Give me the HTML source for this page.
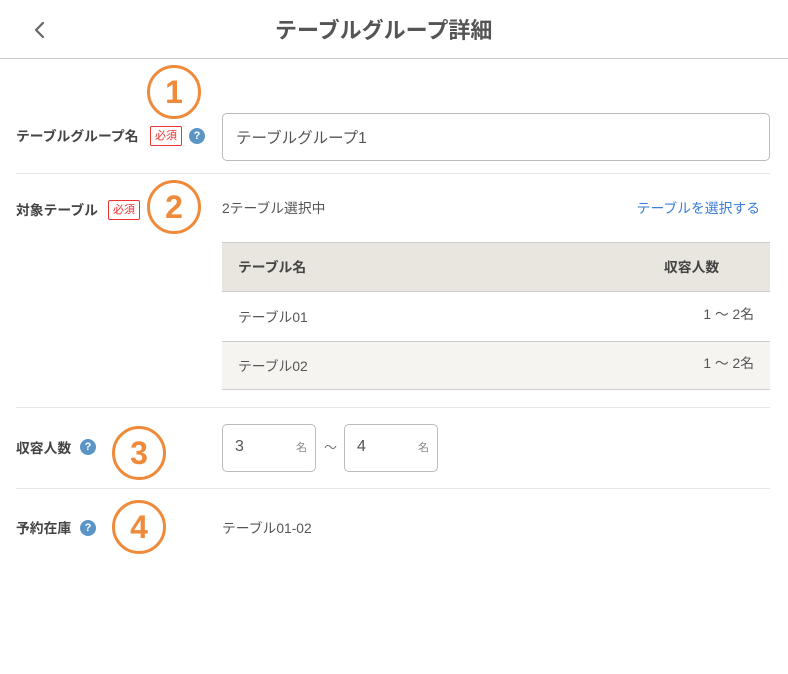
<!DOCTYPE html>
<html><head><meta charset="utf-8"><style>
*{margin:0;padding:0;box-sizing:border-box}
body{width:788px;height:674px;background:#fff;position:relative;font-family:"Liberation Sans","Noto Sans CJK JP",sans-serif;color:#555;overflow:hidden}
.a{position:absolute}
.lbl{font-size:13.8px;font-weight:bold;color:#444}
.req{border:1px solid #e33;color:#e33;font-size:11px;width:32px;height:20px;text-align:center;line-height:18px;border-radius:2px}
.q{width:16px;height:16px;border-radius:50%;background:#5b95c6;color:#fff;font-size:11px;font-weight:bold;text-align:center;line-height:16px}
.c{width:54px;height:54px;border:3px solid #ef8a3a;border-radius:50%;color:#ef8a3a;font-size:32px;font-weight:bold;text-align:center;line-height:48px}
.hr{height:1px;background:#e8e8e8;left:16px;width:754px}
.t{font-size:13.8px;color:#555}
.box{border:1px solid #bbb;border-radius:5px;background:#fff}
</style></head><body>
<svg class="a" style="left:32px;top:20px" width="14" height="20"><path d="M11 3 L4 10 L11 17" fill="none" stroke="#666" stroke-width="2.2" stroke-linecap="round" stroke-linejoin="round"/></svg>
<div class="a" style="left:275px;top:13px;font-size:22px;font-weight:bold;color:#555;white-space:nowrap">テーブルグループ詳細</div>
<div class="a" style="left:0;top:58px;width:788px;height:1px;background:#ccc"></div>

<div class="a lbl" style="left:16px;top:125px">テーブルグループ名</div>
<div class="a req" style="left:150px;top:126px">必須</div>
<div class="a q" style="left:189px;top:128px">?</div>
<div class="a box" style="left:222px;top:113px;width:548px;height:48px"></div>
<div class="a" style="left:236px;top:126px;font-size:15.5px;color:#555">テーブルグループ1</div>
<div class="a c" style="left:147px;top:65px">1</div>
<div class="a hr" style="top:173px"></div>

<div class="a lbl" style="left:16px;top:199px">対象テーブル</div>
<div class="a req" style="left:108px;top:200px">必須</div>
<div class="a c" style="left:147px;top:180px">2</div>
<div class="a t" style="left:222px;top:197px">2テーブル選択中</div>
<div class="a t" style="right:28px;top:197px;color:#3b7dd8">テーブルを選択する</div>
<div class="a" style="left:222px;top:242px;width:548px;height:50px;background:#e9e6df;border-top:1px solid #ccc;border-bottom:1px solid #ccc"></div>
<div class="a t" style="left:238px;top:256px;font-weight:bold;color:#444">テーブル名</div>
<div class="a t" style="left:664px;top:256px;font-weight:bold;color:#444">収容人数</div>
<div class="a t" style="left:238px;top:306px">テーブル01</div>
<div class="a t" style="right:34px;top:303px">1 〜 2名</div>
<div class="a" style="left:222px;top:341px;width:548px;height:49px;background:#f5f4f0;border-top:1px solid #ccc;border-bottom:1px solid #ccc"></div>
<div class="a t" style="left:238px;top:355px">テーブル02</div>
<div class="a t" style="right:34px;top:352px">1 〜 2名</div>
<div class="a hr" style="top:407px"></div>

<div class="a lbl" style="left:16px;top:437px">収容人数</div>
<div class="a q" style="left:80px;top:439px">?</div>
<div class="a c" style="left:112px;top:426px">3</div>
<div class="a box" style="left:222px;top:424px;width:94px;height:48px"></div>
<div class="a" style="left:235px;top:438px;font-size:16px">3</div>
<div class="a" style="left:296px;top:439px;font-size:11px;color:#888">名</div>
<div class="a" style="left:324px;top:437px;font-size:13px;color:#777">〜</div>
<div class="a box" style="left:344px;top:424px;width:94px;height:48px"></div>
<div class="a" style="left:357px;top:438px;font-size:16px">4</div>
<div class="a" style="left:418px;top:439px;font-size:11px;color:#888">名</div>
<div class="a hr" style="top:488px"></div>

<div class="a lbl" style="left:16px;top:517px">予約在庫</div>
<div class="a q" style="left:80px;top:520px">?</div>
<div class="a c" style="left:112px;top:500px">4</div>
<div class="a t" style="left:222px;top:517px">テーブル01-02</div>
</body></html>
